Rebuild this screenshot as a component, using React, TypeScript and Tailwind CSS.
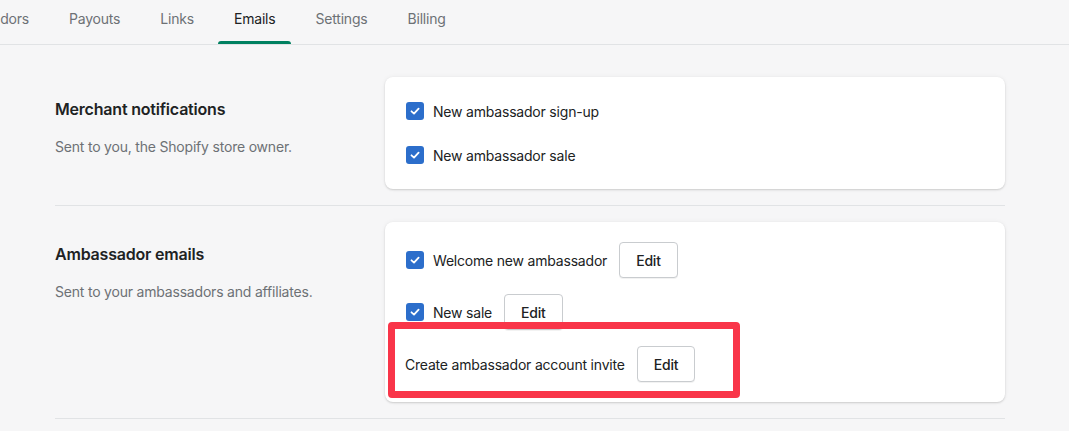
import React from "react";

const font = { fontFamily: "Inter, 'Noto Sans', sans-serif" };

function Check() {
  return (
    <span className="flex h-[18px] w-[18px] shrink-0 items-center justify-center rounded-[3px] bg-[#2c6ecb]">
      <svg width="12" height="12" viewBox="0 0 12 12" fill="none">
        <path d="M2.5 6.3 L5 8.6 L9.6 3.6" stroke="white" strokeWidth="1.8" strokeLinecap="round" strokeLinejoin="round" />
      </svg>
    </span>
  );
}

function EditButton() {
  return (
    <button className="ml-3 flex h-[36px] items-center rounded-[4px] border border-[#c9cccf] bg-white px-4 text-[14px] font-medium tracking-[-0.2px] text-[#202223] shadow-[0_1px_0_rgba(0,0,0,0.05)]">
      Edit
    </button>
  );
}

function Tab({ label, active }: { label: string; active?: boolean }) {
  return (
    <div className="relative flex h-[44px] items-start px-4 pt-[9px]">
      <span className={active ? "text-[14px] leading-[20px] tracking-[-0.2px] text-[#202223]" : "text-[14px] leading-[20px] tracking-[-0.2px] text-[#6d7175]"}>{label}</span>
      {active && <span className="absolute bottom-0 left-0 right-0 h-[3px] rounded-t-[3px] bg-[#008060]" />}
    </div>
  );
}

export default function App() {
  return (
    <div className="h-[431px] w-[1069px] overflow-hidden bg-[#f6f6f7]" style={font}>
      <div className="flex h-[45px] gap-2 border-b border-[#e1e3e5]">
        <div className="flex h-[44px] w-[45px] shrink-0 items-start justify-end overflow-hidden pr-4 pt-[9px]">
          <span className="whitespace-nowrap text-[14px] leading-[20px] tracking-[-0.2px] text-[#6d7175]">Ambassadors</span>
        </div>
        <Tab label="Payouts" />
        <Tab label="Links" />
        <Tab label="Emails" active />
        <Tab label="Settings" />
        <Tab label="Billing" />
      </div>

      <div className="ml-[55px] w-[950px] pt-[32px]">
        <div className="flex gap-5 pb-4">
          <div className="w-[310px] shrink-0 pt-[22px]">
            <h2 className="text-[16px] font-semibold leading-[20px] tracking-[-0.2px] text-[#202223]">Merchant notifications</h2>
            <p className="mt-[18px] text-[14px] leading-[20px] tracking-[-0.2px] text-[#6d7175]">Sent to you, the Shopify store owner.</p>
          </div>
          <div className="flex-1 rounded-[8px] bg-white p-5 shadow-[0_0_5px_rgba(23,24,24,0.05),0_1px_2px_rgba(0,0,0,0.15)]">
            <div className="flex flex-col gap-4">
              <div className="flex h-[28px] items-center gap-[9px] pl-px">
                <Check />
                <span className="text-[14px] tracking-[-0.2px] text-[#202223]">New ambassador sign-up</span>
              </div>
              <div className="flex h-[28px] items-center gap-[9px] pl-px">
                <Check />
                <span className="text-[14px] tracking-[-0.2px] text-[#202223]">New ambassador sale</span>
              </div>
            </div>
          </div>
        </div>

        <div className="h-px bg-[#e1e3e5]" />

        <div className="flex gap-5 pb-4 pt-4">
          <div className="w-[310px] shrink-0 pt-[22px]">
            <h2 className="text-[16px] font-semibold leading-[20px] tracking-[-0.2px] text-[#202223]">Ambassador emails</h2>
            <p className="mt-[18px] text-[14px] leading-[20px] tracking-[-0.2px] text-[#6d7175]">Sent to your ambassadors and affiliates.</p>
          </div>
          <div className="relative flex-1 rounded-[8px] bg-white p-5 shadow-[0_0_5px_rgba(23,24,24,0.05),0_1px_2px_rgba(0,0,0,0.15)]">
            <div className="flex flex-col gap-4">
              <div className="flex h-[36px] items-center pl-px">
                <Check />
                <span className="ml-[9px] text-[14px] tracking-[-0.2px] text-[#202223]">Welcome new ambassador</span>
                <EditButton />
              </div>
              <div className="flex h-[36px] items-center pl-px">
                <Check />
                <span className="ml-[9px] text-[14px] tracking-[-0.2px] text-[#202223]">New sale</span>
                <EditButton />
              </div>
              <div className="flex h-[36px] items-center">
                <span className="text-[14px] tracking-[-0.2px] text-[#202223]">Create ambassador account invite</span>
                <EditButton />
              </div>
            </div>
            <div className="pointer-events-none absolute left-[3px] top-[100px] h-[76px] w-[352px] rounded-[4px] border-[7px] border-[#f93549]" />
          </div>
        </div>

        <div className="h-px bg-[#e1e3e5]" />
      </div>
    </div>
  );
}
